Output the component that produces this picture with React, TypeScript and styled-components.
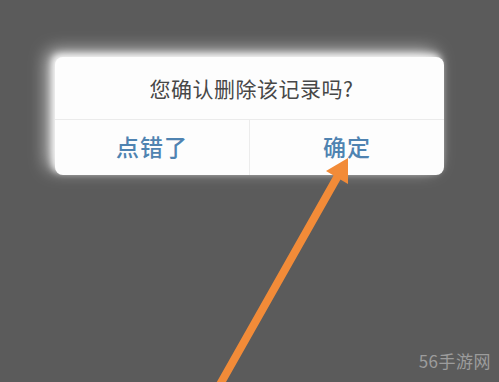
import React from 'react';
import styled, { createGlobalStyle } from 'styled-components';

const GlobalStyle = createGlobalStyle`
  html, body {
    margin: 0;
    padding: 0;
    background: #5b5b5b;
  }
  body {
    font-family: "Noto Sans CJK SC", "Noto Sans", sans-serif;
  }
`;

const Screen = styled.div`
  position: relative;
  width: 499px;
  height: 382px;
  overflow: hidden;
  background: #5b5b5b;
  padding: 57px 0 0 55px;
  box-sizing: border-box;
`;

const Dialog = styled.div`
  width: 389px;
  height: 118px;
  background: #fdfdfd;
  border-radius: 8px;
  box-shadow: -8px -6px 18px rgba(255, 255, 255, 0.7), -3px -3px 7px rgba(255, 255, 255, 0.9);
  display: flex;
  flex-direction: column;
  overflow: hidden;
`;

const Title = styled.div`
  height: 62px;
  display: flex;
  align-items: center;
  justify-content: center;
  padding-left: 4px;
  font-size: 21px;
  color: #474747;
  border-bottom: 1px solid #ebebeb;
  letter-spacing: 0.5px;
`;

const Actions = styled.div`
  flex: 1;
  display: grid;
  grid-template-columns: 194px 1fr;
`;

const Action = styled.button<{ divider?: boolean }>`
  border: 0;
  background: transparent;
  font-family: inherit;
  font-size: 23px;
  font-weight: 500;
  color: #4f83b1;
  letter-spacing: 1px;
  border-left: ${({ divider }) => (divider ? '1px solid #ececec' : '0')};
  padding: 0 0 4px;
  cursor: pointer;
`;

const Arrow = styled.svg`
  position: absolute;
  left: 0;
  top: 0;
`;

const Watermark = styled.div`
  position: absolute;
  right: 8px;
  bottom: 9px;
  font-size: 17px;
  color: #9c9c9c;
  letter-spacing: 0.5px;
`;

export default function App() {
  return (
    <>
      <GlobalStyle />
      <Screen>
        <Dialog>
          <Title>您确认删除该记录吗?</Title>
          <Actions>
            <Action>点错了</Action>
            <Action divider>确定</Action>
          </Actions>
        </Dialog>
        <Arrow width="499" height="382" viewBox="0 0 499 382">
          <line x1="218" y1="388" x2="339" y2="174" stroke="#f28b38" strokeWidth="8" strokeLinecap="round" />
          <polygon points="348,158 326,171 348,184" fill="#f28b38" />
        </Arrow>
        <Watermark>56手游网</Watermark>
      </Screen>
    </>
  );
}
